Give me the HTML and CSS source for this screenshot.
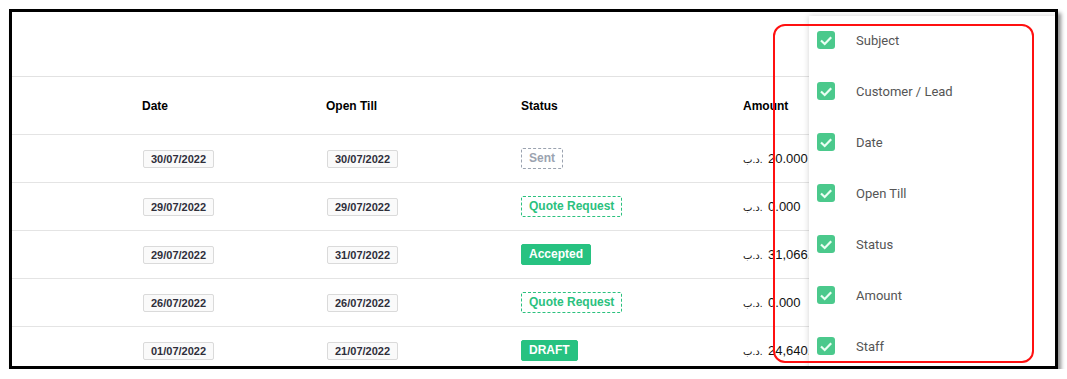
FILE: index.html
```html
<!DOCTYPE html>
<html lang="en">
<head>
  <meta charset="UTF-8" />
  <meta name="viewport" content="width=device-width, initial-scale=1.0"/>
  <title>Proposals</title>
  <link rel="stylesheet" href="styles.css">
</head>
<body>

  <div class="frame">
    <div class="topbar"></div>

    <div class="row head">
      <div></div>
      <div class="cell">Date</div>
      <div class="cell">Open Till</div>
      <div class="cell">Status</div>
      <div class="cell">Amount</div>
    </div>

    <div class="row">
      <div></div>
      <div class="cell"><span class="date">30/07/2022</span></div>
      <div class="cell"><span class="date">30/07/2022</span></div>
      <div class="cell"><span class="status sent">Sent</span></div>
      <div class="cell amount"><span class="cur">ب.د.</span> 20.000</div>
    </div>

    <div class="row">
      <div></div>
      <div class="cell"><span class="date">29/07/2022</span></div>
      <div class="cell"><span class="date">29/07/2022</span></div>
      <div class="cell"><span class="status quote">Quote Request</span></div>
      <div class="cell amount"><span class="cur">ب.د.</span> 0.000</div>
    </div>

    <div class="row">
      <div></div>
      <div class="cell"><span class="date">29/07/2022</span></div>
      <div class="cell"><span class="date">31/07/2022</span></div>
      <div class="cell"><span class="status filled">Accepted</span></div>
      <div class="cell amount"><span class="cur">ب.د.</span> 31,066.000</div>
    </div>

    <div class="row">
      <div></div>
      <div class="cell"><span class="date">26/07/2022</span></div>
      <div class="cell"><span class="date">26/07/2022</span></div>
      <div class="cell"><span class="status quote">Quote Request</span></div>
      <div class="cell amount"><span class="cur">ب.د.</span> 0.000</div>
    </div>

    <div class="row">
      <div></div>
      <div class="cell"><span class="date">01/07/2022</span></div>
      <div class="cell"><span class="date">21/07/2022</span></div>
      <div class="cell"><span class="status filled">DRAFT</span></div>
      <div class="cell amount"><span class="cur">ب.د.</span> 24,640.000</div>
    </div>

    <!-- column visibility dropdown -->
    <ul class="columns-menu">
      <li><span class="check"><svg viewBox="0 0 18 18"><path d="M4 9.5l3.7 3.5 6.5-6.8"/></svg></span>Subject</li>
      <li><span class="check"><svg viewBox="0 0 18 18"><path d="M4 9.5l3.7 3.5 6.5-6.8"/></svg></span>Customer / Lead</li>
      <li><span class="check"><svg viewBox="0 0 18 18"><path d="M4 9.5l3.7 3.5 6.5-6.8"/></svg></span>Date</li>
      <li><span class="check"><svg viewBox="0 0 18 18"><path d="M4 9.5l3.7 3.5 6.5-6.8"/></svg></span>Open Till</li>
      <li><span class="check"><svg viewBox="0 0 18 18"><path d="M4 9.5l3.7 3.5 6.5-6.8"/></svg></span>Status</li>
      <li><span class="check"><svg viewBox="0 0 18 18"><path d="M4 9.5l3.7 3.5 6.5-6.8"/></svg></span>Amount</li>
      <li><span class="check"><svg viewBox="0 0 18 18"><path d="M4 9.5l3.7 3.5 6.5-6.8"/></svg></span>Staff</li>
    </ul>

    <div class="highlight"></div>
  </div>

</body>
</html>
```

FILE: styles.css
```css
body {
  font-family: "Liberation Sans", "DejaVu Sans", sans-serif;
  margin: 0;
  background: #fff;
}

.frame {
  position: relative;
  margin: 9px 0 0 9px;
  width: 1043px;
  height: 354px;
  border: 3px solid #000;
  box-shadow: 3px 4px 4px rgba(0, 0, 0, 0.45);
  background: #fff;
  overflow: hidden;
}

.topbar {
  height: 64px;
  border-bottom: 1px solid #e2e2e2;
}

.row {
  display: grid;
  grid-template-columns: 120px 184px 195px 222px 1fr;
  align-items: center;
  height: 47px;
  border-bottom: 1px solid #e4e4e4;
  font-size: 13px;
  color: #111;
}

.row.head {
  height: 57px;
  font-size: 12px;
  font-weight: bold;
  color: #000;
}

.cell {
  padding-left: 10px;
  white-space: nowrap;
}

.date {
  display: inline-block;
  margin-left: 1px;
  padding: 0 7px;
  line-height: 16px;
  font-size: 11px;
  font-weight: bold;
  color: #2f2f3a;
  background: #fafafa;
  border: 1px solid #dadada;
  border-radius: 2px;
}

.status {
  display: inline-block;
  padding: 0 7px;
  line-height: 19px;
  font-size: 12px;
  font-weight: bold;
  border-radius: 2px;
}

.sent {
  color: #9ba3b0;
  border: 1px dashed #9ba3b0;
}

.quote {
  color: #2bc17e;
  border: 1px dashed #2bc17e;
}

.filled {
  color: #fff;
  background: #27c281;
  border: 1px solid #27c281;
}

.cur {
  unicode-bidi: bidi-override;
  direction: ltr;
  font-size: 10px;
  margin-right: 2px;
}

.columns-menu {
  position: absolute;
  left: 797px;
  top: 4px;
  right: 0;
  bottom: -10px;
  margin: 0;
  padding: 0;
  list-style: none;
  background: #fff;
  box-shadow: 0 0 6px rgba(0, 0, 0, 0.18);
  font-family: Roboto, "Liberation Sans", sans-serif;
  font-size: 13px;
  color: #555;
}

.columns-menu li {
  display: flex;
  align-items: center;
  gap: 21px;
  height: 18px;
  padding: 15px 0 18px 8px;
}

.check {
  width: 18px;
  height: 18px;
  border-radius: 3px;
  background: #4bc98c;
}

.check svg {
  display: block;
  width: 18px;
  height: 18px;
  fill: none;
  stroke: #eafff3;
  stroke-width: 2.2;
}

.highlight {
  position: absolute;
  left: 761px;
  top: 12px;
  width: 257px;
  height: 335px;
  border: 2px solid #ff1010;
  border-radius: 12px;
}
```
